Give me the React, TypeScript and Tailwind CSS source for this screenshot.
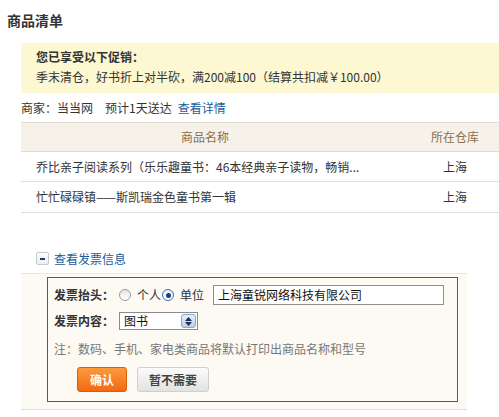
import React from "react";

function Radio({ checked }: { checked?: boolean }) {
  return (
    <span
      className={
        "inline-flex h-[12px] w-[12px] items-center justify-center rounded-full border " +
        (checked
          ? "border-[#3c6db4] bg-gradient-to-b from-[#e8eef8] to-[#ffffff]"
          : "border-[#9a9a9a] bg-gradient-to-b from-[#e6e6e6] to-[#ffffff]")
      }
    >
      {checked ? <span className="h-[5px] w-[5px] rounded-full bg-[#1d3f7a]" /> : null}
    </span>
  );
}

export default function App() {
  return (
    <div
      className="h-[417px] w-[499px] overflow-hidden bg-white text-[12px] text-[#333]"
      style={{ fontFamily: '"Noto Sans CJK SC", "Liberation Sans", sans-serif' }}
    >
      <div className="h-[43px] pl-[7px] pt-[13px] text-[14px] font-bold leading-[14px] text-[#333]">
        商品清单
      </div>

      <div className="ml-[21px] h-[50px] bg-[#fdf7d2] pl-[15px] pt-[4px] leading-[20px]">
        <div className="font-bold">您已享受以下促销：</div>
        <div>季末清仓，好书折上对半砍，满200减100（结算共扣减￥100.00）</div>
      </div>

      <div className="ml-[21px] flex h-[29px] items-center">
        <span>商家：当当网</span>
        <span className="ml-[12px]">预计1天送达</span>
        <span className="ml-[6px] text-[#1b5c9b]">查看详情</span>
      </div>

      <div className="ml-[21px]">
        <div className="grid h-[30px] grid-cols-[368px_22px_88px] items-center border-y border-[#e2dbcf] bg-[#f6f2ea] text-[#8c6e4c]">
          <div className="text-center">商品名称</div>
          <div />
          <div className="text-center">所在仓库</div>
        </div>
        <div className="grid h-[30px] grid-cols-[368px_22px_88px] items-center border-b border-[#dedede]">
          <div className="pl-[15px] whitespace-nowrap">乔比亲子阅读系列（乐乐趣童书：46本经典亲子读物，畅销...</div>
          <div />
          <div className="text-center">上海</div>
        </div>
        <div className="grid h-[31px] grid-cols-[368px_22px_88px] items-center border-b border-[#dedede]">
          <div className="pl-[15px]">忙忙碌碌镇——斯凯瑞金色童书第一辑</div>
          <div />
          <div className="text-center">上海</div>
        </div>
      </div>

      <div className="ml-[36px] mt-[37px] flex h-[17px] items-center">
        <span className="flex h-[13px] w-[13px] items-center justify-center rounded-[2px] border border-[#c8c8c8] bg-gradient-to-b from-white to-[#eeeeee]">
          <span className="h-[2px] w-[5px] bg-[#1d3f6e]" />
        </span>
        <span className="ml-[5px] text-[#1b5c9b]">查看发票信息</span>
      </div>

      <div className="ml-[21px] mt-[6px] w-[446px] border-b border-t border-b-[#e8e0d5] border-t-[#f6e2d4] bg-[#fdf9f3] pb-[7px] pl-[26px] pr-[9px] pt-[3px]">
        <div className="h-[125px] w-[411px] border border-[#c62a2a] pl-[6px] pt-[7px]">
          <div className="flex h-[20px] items-center">
            <span className="font-bold">发票抬头：</span>
            <span className="ml-[5px] flex items-center">
              <Radio />
            </span>
            <span className="ml-[6px]">个人</span>
            <span className="ml-[1px] flex items-center">
              <Radio checked />
            </span>
            <span className="ml-[6px]">单位</span>
            <div className="ml-[9px] flex h-[20px] w-[231px] items-center border border-[#8f8f8f] bg-white pl-[4px] text-[#111]">
              上海童锐网络科技有限公司
            </div>
          </div>

          <div className="mt-[7px] flex h-[18px] items-center">
            <span className="font-bold">发票内容：</span>
            <div className="ml-[5px] flex h-[18px] w-[79px] items-center justify-between border border-[#8a8a8a] bg-white pl-[4px] pr-[1px] text-[#111]">
              <span>图书</span>
              <span className="flex h-[14px] w-[15px] flex-col items-center justify-center gap-[1px] rounded-[3px] border border-[#8ba6cf] bg-gradient-to-b from-[#e6eefb] to-[#bccfee]">
                <svg width="7" height="4" viewBox="0 0 7 4">
                  <path d="M3.5 0 L7 4 L0 4 Z" fill="#1f2f4f" />
                </svg>
                <svg width="7" height="4" viewBox="0 0 7 4">
                  <path d="M0 0 L7 0 L3.5 4 Z" fill="#1f2f4f" />
                </svg>
              </span>
            </div>
          </div>

          <div className="mt-[11px] flex h-[16px] items-center text-[#777]">
            注：数码、手机、家电类商品将默认打印出商品名称和型号
          </div>

          <div className="ml-[23px] mt-[10px] flex h-[25px] items-center gap-[10px]">
            <button className="flex h-[25px] w-[50px] items-center justify-center rounded-[3px] border border-[#dd5c08] bg-gradient-to-b from-[#fb9a3c] to-[#f2680c] font-bold text-white">
              确认
            </button>
            <button className="flex h-[25px] w-[72px] items-center justify-center rounded-[3px] border border-[#cfcfcf] bg-gradient-to-b from-[#fbfbfb] to-[#e2e2e2] font-bold text-[#444]">
              暂不需要
            </button>
          </div>
        </div>
      </div>
    </div>
  );
}
